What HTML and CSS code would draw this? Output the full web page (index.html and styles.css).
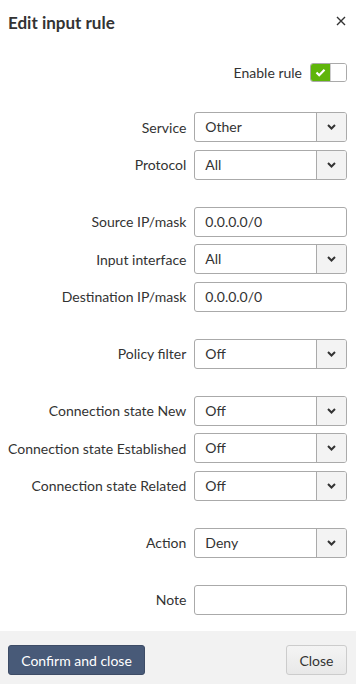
FILE: index.html
```html
<!DOCTYPE html>
<html lang="en">

<head>
  <meta charset="UTF-8">
  <title>Edit input rule</title>
  <link rel="stylesheet" href="styles.css">
</head>

<body>
  <div class="modal">
    <div class="modal-header">
      <h4 class="modal-title">Edit input rule</h4>
      <span class="modal-close">
        <svg width="10" height="10" viewBox="0 0 10 10"><path d="M1 1L9 9M9 1L1 9" stroke="#333" stroke-width="1.4" fill="none"/></svg>
      </span>
    </div>

    <div class="modal-body">
      <div class="enable-row">
        <span class="enable-label">Enable rule</span>
        <span class="switch">
          <span class="switch-on">
            <svg width="11" height="9" viewBox="0 0 11 9"><path d="M1.5 4.5L4.2 7.2L9.5 1.8" stroke="#fff" stroke-width="2.2" fill="none"/></svg>
          </span>
          <span class="switch-knob"></span>
        </span>
      </div>

      <div class="form-grid">
        <label class="form-label">Service</label>
        <div class="select"><span class="select-text">Other</span><span class="caret"><svg width="9" height="6" viewBox="0 0 9 6"><path d="M1 1L4.5 4.5L8 1" stroke="#333" stroke-width="2" fill="none"/></svg></span></div>
        <label class="form-label">Protocol</label>
        <div class="select"><span class="select-text">All</span><span class="caret"><svg width="9" height="6" viewBox="0 0 9 6"><path d="M1 1L4.5 4.5L8 1" stroke="#333" stroke-width="2" fill="none"/></svg></span></div>

        <div class="spacer"></div>

        <label class="form-label">Source IP/mask</label>
        <input class="text-input" type="text" value="0.0.0.0/0">
        <label class="form-label">Input interface</label>
        <div class="select"><span class="select-text">All</span><span class="caret"><svg width="9" height="6" viewBox="0 0 9 6"><path d="M1 1L4.5 4.5L8 1" stroke="#333" stroke-width="2" fill="none"/></svg></span></div>
        <label class="form-label">Destination IP/mask</label>
        <input class="text-input" type="text" value="0.0.0.0/0">

        <div class="spacer"></div>

        <label class="form-label">Policy filter</label>
        <div class="select"><span class="select-text">Off</span><span class="caret"><svg width="9" height="6" viewBox="0 0 9 6"><path d="M1 1L4.5 4.5L8 1" stroke="#333" stroke-width="2" fill="none"/></svg></span></div>

        <div class="spacer"></div>

        <label class="form-label">Connection state New</label>
        <div class="select"><span class="select-text">Off</span><span class="caret"><svg width="9" height="6" viewBox="0 0 9 6"><path d="M1 1L4.5 4.5L8 1" stroke="#333" stroke-width="2" fill="none"/></svg></span></div>
        <label class="form-label">Connection state Established</label>
        <div class="select"><span class="select-text">Off</span><span class="caret"><svg width="9" height="6" viewBox="0 0 9 6"><path d="M1 1L4.5 4.5L8 1" stroke="#333" stroke-width="2" fill="none"/></svg></span></div>
        <label class="form-label">Connection state Related</label>
        <div class="select"><span class="select-text">Off</span><span class="caret"><svg width="9" height="6" viewBox="0 0 9 6"><path d="M1 1L4.5 4.5L8 1" stroke="#333" stroke-width="2" fill="none"/></svg></span></div>

        <div class="spacer"></div>

        <label class="form-label">Action</label>
        <div class="select"><span class="select-text">Deny</span><span class="caret"><svg width="9" height="6" viewBox="0 0 9 6"><path d="M1 1L4.5 4.5L8 1" stroke="#333" stroke-width="2" fill="none"/></svg></span></div>

        <div class="spacer"></div>

        <label class="form-label">Note</label>
        <input class="text-input" type="text" value="">
      </div>
    </div>

    <div class="modal-footer">
      <button class="btn btn-primary">Confirm and close</button>
      <button class="btn btn-default">Close</button>
    </div>
  </div>
</body>

</html>
```

FILE: styles.css
```css
* {
  margin: 0;
  padding: 0;
  box-sizing: border-box;
}
body {
  font-family: Lato, "Open Sans", sans-serif;
  font-size: 14px;
  color: #333;
  background: #fff;
}
.modal {
  width: 356px;
  height: 684px;
  display: flex;
  flex-direction: column;
}

/* header */
.modal-header {
  height: 44px;
  display: flex;
  align-items: center;
  justify-content: space-between;
  padding: 0 10px 0 8px;
}
.modal-title {
  font-size: 17px;
  font-weight: bold;
  color: #333;
}
.modal-close {
  display: flex;
  margin-top: -2px;
}

/* body */
.modal-body {
  flex: 1;
  padding: 19px 9px 0 8px;
}
.enable-row {
  display: flex;
  justify-content: flex-end;
  align-items: center;
  gap: 8px;
  height: 19px;
  margin-bottom: 30px;
}
.switch {
  display: flex;
  width: 37px;
  height: 19px;
  border: 1px solid #aaa;
  border-radius: 3px;
  overflow: hidden;
}
.switch-on {
  width: 19px;
  background: #5fb50a;
  display: flex;
  align-items: center;
  justify-content: center;
}
.switch-knob {
  flex: 1;
  background: #fff;
  border-left: 1px solid #ccc;
}

.form-grid {
  display: grid;
  grid-template-columns: auto 1fr;
  column-gap: 8px;
  row-gap: 7.5px;
  align-items: center;
}
.form-label {
  text-align: right;
  white-space: nowrap;
}
.spacer {
  grid-column: 1 / 3;
  height: 12px;
}
.select, .text-input {
  height: 30px;
  border: 1px solid #aaa;
  border-radius: 3px;
  background: #fff;
  font-family: inherit;
  font-size: 14px;
  color: #333;
}
.select {
  display: flex;
  overflow: hidden;
}
.select-text {
  flex: 1;
  padding-left: 10px;
  line-height: 28px;
}
.caret {
  width: 30px;
  border-left: 1px solid #aaa;
  background: #f3f3f3;
  display: flex;
  align-items: center;
  justify-content: center;
}
.text-input {
  width: 100%;
  padding: 0 10px;
  outline: none;
}

/* footer */
.modal-footer {
  height: 53px;
  background: #f2f2f2;
  display: flex;
  justify-content: space-between;
  align-items: flex-start;
  padding: 14px 9px 0 8px;
}
.btn {
  height: 30px;
  border-radius: 3px;
  font-family: inherit;
  font-size: 14px;
  padding: 0;
  white-space: nowrap;
  cursor: pointer;
}
.btn-primary {
  width: 137px;
  background: #485a78;
  border: 1px solid #3d4c66;
  color: #fff;
}
.btn-default {
  width: 61px;
  background: linear-gradient(#f4f4f4, #e8e8e8);
  border: 1px solid #ccc;
  color: #333;
}
```
